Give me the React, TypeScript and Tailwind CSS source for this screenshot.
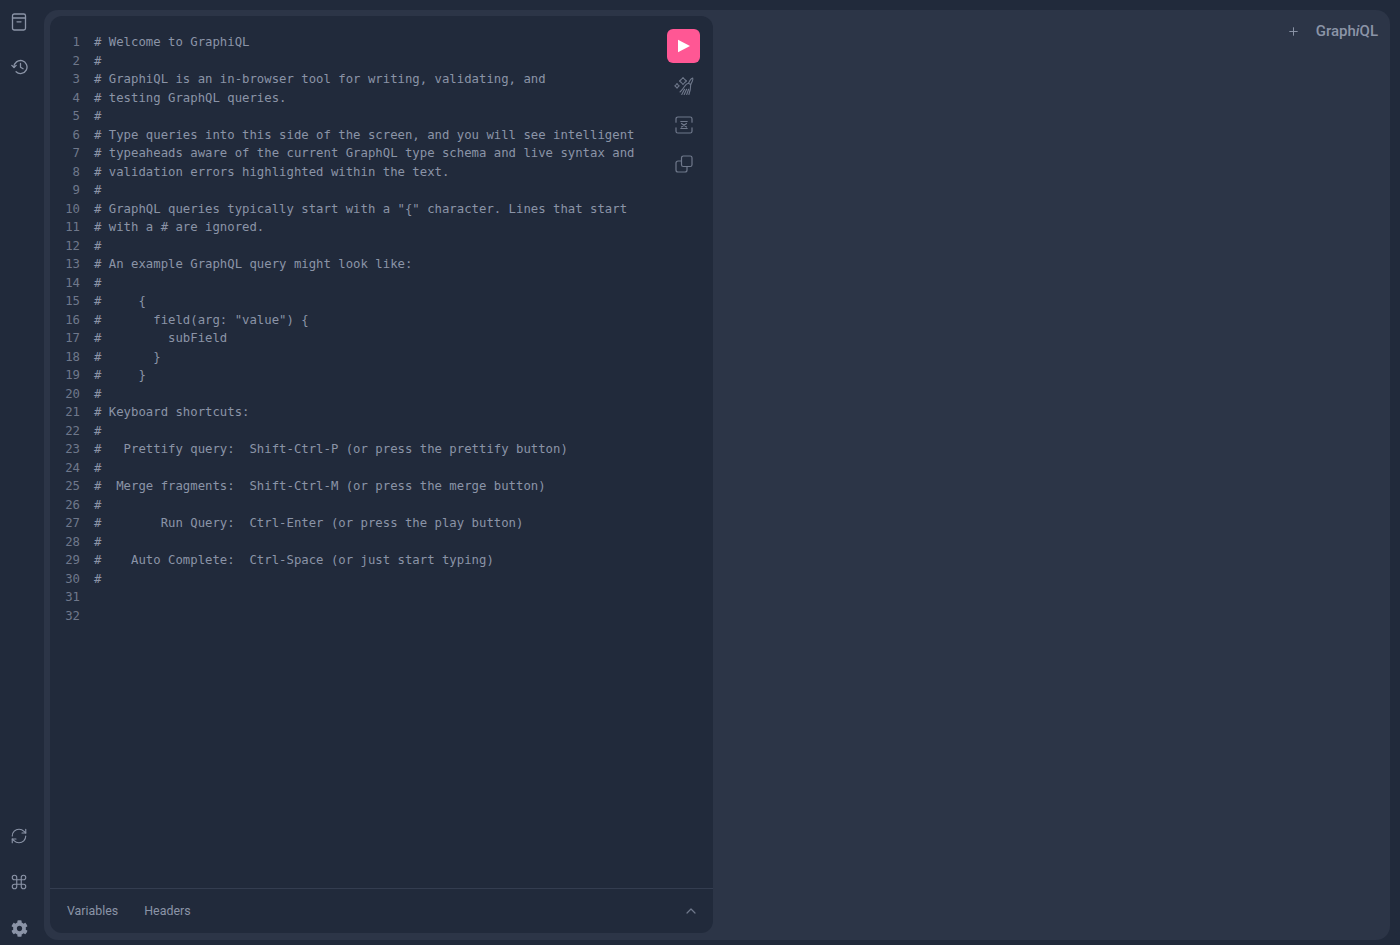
import { Plus, ChevronUp, RefreshCw, Command } from "lucide-react";
import { FaCog } from "react-icons/fa";

const lines = [
  "# Welcome to GraphiQL",
  "#",
  "# GraphiQL is an in-browser tool for writing, validating, and",
  "# testing GraphQL queries.",
  "#",
  "# Type queries into this side of the screen, and you will see intelligent",
  "# typeaheads aware of the current GraphQL type schema and live syntax and",
  "# validation errors highlighted within the text.",
  "#",
  '# GraphQL queries typically start with a "{" character. Lines that start',
  "# with a # are ignored.",
  "#",
  "# An example GraphQL query might look like:",
  "#",
  "#     {",
  '#       field(arg: "value") {',
  "#         subField",
  "#       }",
  "#     }",
  "#",
  "# Keyboard shortcuts:",
  "#",
  "#   Prettify query:  Shift-Ctrl-P (or press the prettify button)",
  "#",
  "#  Merge fragments:  Shift-Ctrl-M (or press the merge button)",
  "#",
  "#        Run Query:  Ctrl-Enter (or press the play button)",
  "#",
  "#    Auto Complete:  Ctrl-Space (or just start typing)",
  "#",
  "",
  "",
];

function DocsIcon() {
  return (
    <svg width="16" height="18" viewBox="0 0 16 18" fill="none" stroke="currentColor" strokeWidth="1.3" strokeLinecap="round" strokeLinejoin="round">
      <rect x="1.500" y="1" width="13" height="16" rx="1.800" />
      <path d="M1.500 5h13" />
      <path d="M6 8.800h4" />
    </svg>
  );
}

function HistoryIcon() {
  return (
    <svg width="18" height="18" viewBox="0 0 18 18" fill="none" stroke="currentColor" strokeWidth="1.300" strokeLinecap="round" strokeLinejoin="round">
      <path d="M4 9a6.500 6.500 0 1 1 2.100 4.800" />
      <path d="M1.800 7.400 4 9.500 6.200 7.400" />
      <path d="M10.500 5.500v3.800l2.600 1.500" />
    </svg>
  );
}

function PrettifyIcon() {
  return (
    <svg width="20" height="20" viewBox="0 0 20 20" fill="none" stroke="currentColor" strokeWidth="1.100" strokeLinecap="round" strokeLinejoin="round">
      <path d="M18.700 2c-1.100.3-1.900 1.100-2.500 2.100l-1.700 3.100 2.200 1.200 1.600-3.100c.5-1 .7-2.200.4-3.300z" />
      <path d="M14.500 7.200c-1.400.3-2.600 1.100-3.400 2.400-1.200 1.800-2.700 4.300-5.100 6.400" />
      <path d="M16.700 8.400c0 3.400-.7 7-1.800 10.100" />
      <path d="M10.500 13.200 7.800 18.500M12.600 13.200 10.200 18.500M14.600 13.200 12.700 18.500" />
      <path d="M9 1.500 10.700 3.500 12.500 5 10.700 6.500 9 8.500 7.300 6.500 5.500 5 7.300 3.500z" />
      <path d="M3 7.500 4 8.800 5.200 9.800 4 10.800 3 12.100 2 10.800.8 9.800 2 8.800z" />
    </svg>
  );
}

function MergeIcon() {
  return (
    <svg width="18" height="18" viewBox="0 0 18 18" fill="none" stroke="currentColor" strokeWidth="1.200" strokeLinecap="round" strokeLinejoin="round">
      <path d="M1 6.200V2.800A1.800 1.800 0 0 1 2.800 1h12.400A1.800 1.800 0 0 1 17 2.800v3.400" />
      <path d="M1 11.800v3.400A1.800 1.800 0 0 0 2.800 17h12.400a1.800 1.800 0 0 0 1.800-1.800v-3.400" />
      <path d="M5.800 5.500h6.400M5.800 12.500h6.400M6.500 7.500 11.500 11M11.500 7.500 6.500 11" />
    </svg>
  );
}

function CopyIcon() {
  return (
    <svg width="18" height="18" viewBox="0 0 18 18" fill="none" stroke="currentColor" strokeWidth="1.200" strokeLinejoin="round" strokeLinecap="round">
      <rect x="6.500" y="1" width="10.500" height="10.500" rx="1.800" />
      <path d="M6.500 6H3a2 2 0 0 0-2 2v7a2 2 0 0 0 2 2h7a2 2 0 0 0 2-2v-3.500" />
    </svg>
  );
}

export default function App() {
  return (
    <div className="flex h-screen overflow-hidden bg-[#212a3b] font-['Roboto',sans-serif] text-[#8b94a7]">
      <div className="flex w-[38px] shrink-0 flex-col items-center pt-[13px] pb-[8px]">
        <div className="flex h-[18px] items-center"><DocsIcon /></div>
        <div className="mt-[27px]"><HistoryIcon /></div>
        <div className="mt-auto"><RefreshCw size={18} strokeWidth={1.5} /></div>
        <div className="mt-[28px]"><Command size={18} strokeWidth={1.5} /></div>
        <div className="mt-[29px]"><FaCog size={17} /></div>
      </div>
      <div className="ml-[6px] mt-[10px] mb-[5px] mr-[10px] flex flex-1 rounded-[14px] bg-[#2c3547] pt-[6px] pl-[6px] pb-[7px]">
        <div className="flex w-[663px] shrink-0 flex-col rounded-[12px] bg-[#212a3b]">
          <div className="flex flex-1 pt-[17px]">
            <div className="w-[30px] text-right font-['DejaVu_Sans_Mono',monospace] text-[12.3px] leading-[18.5px] text-[#6f788b]">
              {lines.map((_, i) => (
                <div key={i}>{i + 1}</div>
              ))}
            </div>
            <div className="ml-[14px] w-[523px] font-['DejaVu_Sans_Mono',monospace] text-[12.3px] leading-[18.5px] whitespace-pre text-[#8b94a7]">
              {lines.map((l, i) => (
                <div key={i} className="h-[18.5px]">{l}</div>
              ))}
            </div>
            <div className="ml-[50px] mt-[-4px] flex w-[33px] flex-col items-center text-[#6f788b]">
              <div className="flex h-[34px] w-[33px] items-center justify-center rounded-[6px] bg-[#ff5794]">
                <svg width="14" height="14" viewBox="0 0 14 14" fill="white"><path d="M1 .7v12.600L13 7z" /></svg>
              </div>
              <div className="mt-[13px]"><PrettifyIcon /></div>
              <div className="mt-[20px]"><MergeIcon /></div>
              <div className="mt-[21px]"><CopyIcon /></div>
            </div>
          </div>
          <div className="flex h-[45px] items-center border-t border-[#343d50] pl-[17px] pr-[14px] text-[12.400px]">
            <span>Variables</span>
            <span className="ml-[26px]">Headers</span>
            <ChevronUp size={16} strokeWidth={1.800} className="ml-auto text-[#6f788b]" />
          </div>
        </div>
        <div className="flex flex-1 items-start justify-end pr-[12px] pt-[6px]">
          <Plus size={13} strokeWidth={1.800} className="mt-[3px]" />
          <div className="ml-[16px] text-[15px] leading-[19px] font-medium">
            Graph<em className="font-medium">i</em>QL
          </div>
        </div>
      </div>
    </div>
  );
}
